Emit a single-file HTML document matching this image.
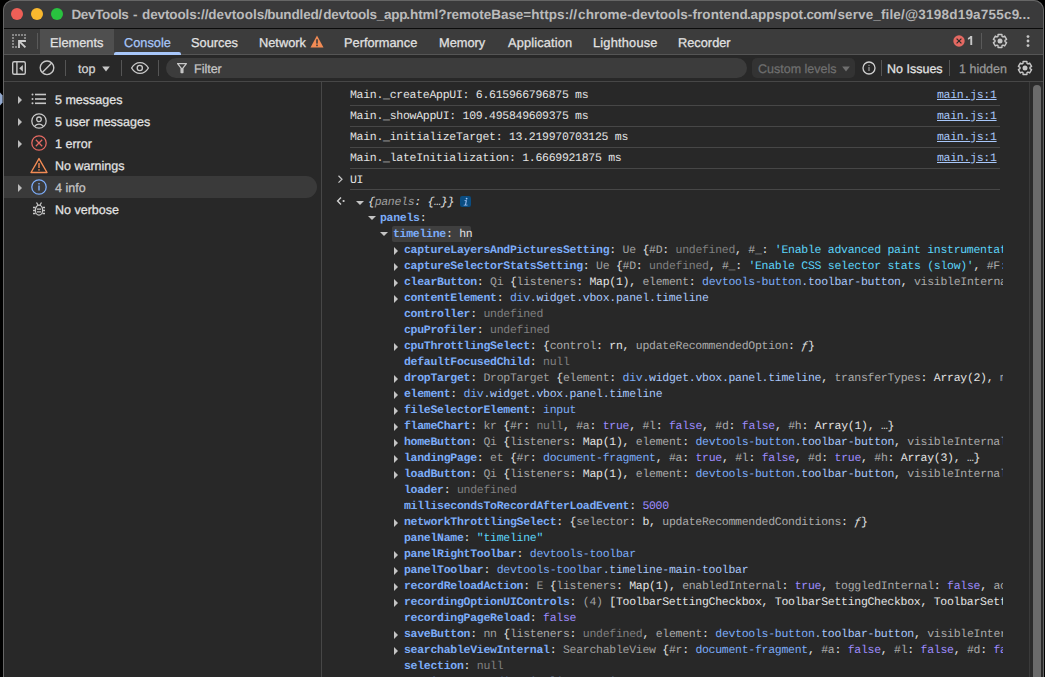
<!DOCTYPE html>
<html><head><meta charset="utf-8">
<style>
*{box-sizing:border-box}
html,body{margin:0;padding:0}
body{text-rendering:geometricPrecision;width:1045px;height:677px;overflow:hidden;position:relative;background:#000;font-family:"Liberation Sans",sans-serif;color:#e3e3e3}
.a{position:absolute}
svg{position:absolute;overflow:visible}
#clip{position:absolute;left:3px;top:0;width:1041px;height:700px;border-radius:10px 10px 0 0;overflow:hidden;background:#282828}
#c{position:absolute;left:-3px;top:0;width:1045px;height:700px}
#frame{position:absolute;left:3px;top:0;width:1041px;height:720px;border:1px solid #666;border-bottom:none;border-radius:10px 10px 0 0}
.dot{position:absolute;width:12px;height:12px;border-radius:50%;top:8px}
.tt{position:absolute;left:72px;top:7px;font-size:13.5px;line-height:16px;font-weight:bold;color:#bbbbbb;white-space:nowrap}
.tab{-webkit-text-stroke:0.25px currentColor;position:absolute;top:29px;height:25px;font-size:12.8px;line-height:25px;color:#e3e3e3;white-space:nowrap}
.sep{position:absolute;width:1px;background:#555}
.ui{-webkit-text-stroke:0.25px currentColor;position:absolute;font-size:12.5px;line-height:16px;white-space:nowrap}
.srow{-webkit-text-stroke:0.25px currentColor;position:absolute;left:55px;font-size:12.5px;line-height:22px;margin-top:1px;white-space:nowrap;color:#e3e3e3}
.tri{position:absolute;width:0;height:0;border-top:4px solid transparent;border-bottom:4px solid transparent;border-left:4px solid #bcbcbc}
.mono{font-family:"Liberation Mono",monospace;font-size:11.5px;letter-spacing:-0.28px;line-height:16px;white-space:nowrap;position:absolute}
.msg{left:350px;color:#e3e3e3}
.lnk{position:absolute;left:937px;font-family:"Liberation Mono",monospace;font-size:11.5px;letter-spacing:-0.28px;line-height:16px;color:#a8c7fa;text-decoration:underline}
.hr{position:absolute;left:350px;width:650px;height:1px;background:#474747}
.pl{position:absolute;left:404px;width:599px;overflow:hidden;font-family:"Liberation Mono",monospace;font-size:11.5px;letter-spacing:-0.28px;line-height:16px;height:16px;white-space:nowrap;color:#e3e3e3}
.pl .rt{position:absolute}
.rtri{position:absolute;left:394px;width:0;height:0;border-top:4px solid transparent;border-bottom:4px solid transparent;border-left:4.3px solid #c4c4c4}
.dtri{position:absolute;width:0;height:0;border-left:4px solid transparent;border-right:4px solid transparent;border-top:4.5px solid #c4c4c4}
.n{color:#7cacf8;font-weight:bold}
.t{color:#a0a0a0}
.k{color:#ababab}
.u{color:#808080}
.s{color:#5cd5fb}
.b{color:#9e8cff}
.nd{color:#7cacf8}
.nc{color:#a8c7fa}
</style></head>
<body>
<svg style="left:0;top:92px" width="3" height="14" viewBox="0 0 3 14"><path d="M0 0.5L2.6 3.5V10.5L0 13.5z" fill="#93a9cf"/></svg>
<div id="clip"><div id="c">
  <!-- title bar -->
  <div class="a" style="left:0;top:0;width:1045px;height:28px;background:#3a3a3b"></div>
  <div class="a" style="left:0;top:28px;width:1045px;height:1px;background:#0b0b0b"></div>
  <div class="dot" style="left:11px;background:#ee5f57"></div>
  <div class="dot" style="left:31px;background:#f8b82e"></div>
  <div class="dot" style="left:51px;background:#29c23f"></div>
  <div class="tt"><span style="position:absolute;left:-0.60px;letter-spacing:-0.335px">DevTools </span><span style="position:absolute;left:60.90px;letter-spacing:0.425px">- </span><span style="position:absolute;left:70.00px;letter-spacing:-0.111px">devtools://</span><span style="position:absolute;left:136.30px;letter-spacing:0.070px">devtools/</span><span style="position:absolute;left:195.20px;letter-spacing:-0.156px">bundled/</span><span style="position:absolute;left:251.20px;letter-spacing:-0.244px">devtools_app</span><span style="position:absolute;left:334.30px;letter-spacing:-0.067px">.html?</span><span style="position:absolute;left:374.40px;letter-spacing:-0.035px">remoteBase=</span><span style="position:absolute;left:459.20px;letter-spacing:0.112px">https://</span><span style="position:absolute;left:506.10px;letter-spacing:0.048px">chrome-</span><span style="position:absolute;left:559.70px;letter-spacing:0.076px">devtools-</span><span style="position:absolute;left:620.40px;letter-spacing:0.094px">frontend</span><span style="position:absolute;left:674.90px;letter-spacing:-0.019px">.appspot</span><span style="position:absolute;left:731.00px;letter-spacing:-0.373px">.com/</span><span style="position:absolute;left:765.40px;letter-spacing:0.131px">serve_file/</span><span style="position:absolute;left:832.90px;letter-spacing:0.220px">@3198d19a755c9</span><span style="position:absolute;left:946.50px;letter-spacing:0.250px">...</span></div>

  <!-- tab bar -->
  <div class="a" style="left:0;top:29px;width:1045px;height:25px;background:#3c3c3c"></div>
  <div class="a" style="left:0;top:54px;width:1045px;height:1px;background:#555"></div>
  <svg style="left:11px;top:33px" width="16" height="16" viewBox="0 0 16 16">
    <g fill="#b0b0b0"><rect x="1.2" y="1.2" width="1.6" height="1.6"/><rect x="4.2" y="1.2" width="1.6" height="1.6"/><rect x="7.2" y="1.2" width="1.6" height="1.6"/><rect x="10.2" y="1.2" width="1.6" height="1.6"/><rect x="13.2" y="1.2" width="1.6" height="1.6"/><rect x="1.2" y="4.2" width="1.6" height="1.6"/><rect x="1.2" y="7.2" width="1.6" height="1.6"/><rect x="1.2" y="10.2" width="1.6" height="1.6"/><rect x="1.2" y="13.2" width="1.6" height="1.6"/><rect x="4.2" y="13.2" width="1.6" height="1.6"/><rect x="13.2" y="4.2" width="1.6" height="1.6"/></g>
    <path d="M7.1 7.1h7.8v1.8H8.9v6H7.1z" fill="#d0d0d0"/><path d="M8.4 8.4L14.4 14.4" stroke="#d0d0d0" stroke-width="1.8"/>
  </svg>
  <div class="sep" style="left:37px;top:33px;height:16px;background:#5a5a5a"></div>
  <div class="a" style="left:40px;top:29px;width:74px;height:25px;background:#4f4f4f"></div>
  <div class="tab" style="left:50px;top:29.5px">Elements</div>
  <div class="tab" style="left:124px;top:29.5px;color:#a8c7fa">Console</div>
  <div class="a" style="left:114px;top:52px;width:67px;height:3px;background:#a8c7fa;border-radius:2px 2px 0 0"></div>
  <div class="tab" style="left:191px;top:29.5px">Sources</div>
  <div class="tab" style="left:259px;top:29.5px">Network</div>
  <svg style="left:310px;top:35px" width="14" height="13" viewBox="0 0 14 13">
    <path d="M7 0.5L13.5 12.5H0.5z" fill="#f28b54"/>
    <rect x="6.2" y="4.3" width="1.6" height="4.3" fill="#3c3c3c"/><rect x="6.2" y="9.6" width="1.6" height="1.6" fill="#3c3c3c"/>
  </svg>
  <div class="tab" style="left:344px;top:29.5px">Performance</div>
  <div class="tab" style="left:439px;top:29.5px">Memory</div>
  <div class="tab" style="left:508px;top:29.5px;letter-spacing:0.15px">Application</div>
  <div class="tab" style="left:593px;top:29.5px;letter-spacing:0.2px">Lighthouse</div>
  <div class="tab" style="left:678px;top:29.5px">Recorder</div>
  <svg style="left:953px;top:35px" width="12" height="12" viewBox="0 0 12 12">
    <circle cx="6" cy="6" r="5.7" fill="#e46962"/>
    <path d="M3.6 3.6L8.4 8.4M8.4 3.6L3.6 8.4" stroke="#2a2a2a" stroke-width="1.2"/>
  </svg>
  <svg style="left:966px;top:35px" width="8" height="11" viewBox="0 0 8 11"><path d="M4.3 1H6.2V10H4.3V3.4C3.6 4 2.8 4.4 1.9 4.7V3C3 2.6 3.8 1.9 4.3 1z" fill="#c7c7c7"/></svg>
  <div class="sep" style="left:981px;top:33px;height:16px;background:#5a5a5a"></div>
  <svg style="left:992px;top:33px" width="16" height="16" viewBox="0 0 16 16">
    <path d="M5.99 3.42 L6.07 1.48 L9.93 1.48 L10.01 3.42 L10.96 3.97 L12.68 3.07 L14.61 6.41 L12.97 7.45 L12.97 8.55 L14.61 9.59 L12.68 12.93 L10.96 12.03 L10.01 12.58 L9.93 14.52 L6.07 14.52 L5.99 12.58 L5.04 12.03 L3.32 12.93 L1.39 9.59 L3.03 8.55 L3.03 7.45 L1.39 6.41 L3.32 3.07 L5.04 3.97 Z" fill="none" stroke="#c7c7c7" stroke-width="1.4" stroke-linejoin="round"/>
    <circle cx="8" cy="8" r="2.5" fill="#c7c7c7"/>
  </svg>
  <svg style="left:1024px;top:33px" width="8" height="16" viewBox="0 0 8 16" fill="#c7c7c7">
    <circle cx="4" cy="3.6" r="1.4"/><circle cx="4" cy="8" r="1.4"/><circle cx="4" cy="12.6" r="1.4"/>
  </svg>

  <!-- console toolbar -->
  <div class="a" style="left:0;top:81px;width:1045px;height:1px;background:#474747"></div>
  <svg style="left:11px;top:60px" width="16" height="16" viewBox="0 0 16 16">
    <rect x="1.7" y="1.7" width="12.6" height="12.6" rx="1.5" fill="none" stroke="#c7c7c7" stroke-width="1.4"/>
    <rect x="5.2" y="1.7" width="1.4" height="12.6" fill="#c7c7c7"/>
    <path d="M8.2 8.3L11.9 5V11.7z" fill="#c7c7c7"/>
  </svg>
  <svg style="left:39px;top:60px" width="16" height="16" viewBox="0 0 16 16">
    <circle cx="8" cy="7.8" r="6.8" fill="none" stroke="#c7c7c7" stroke-width="1.4"/>
    <path d="M3.3 12.5L12.7 3.1" stroke="#c7c7c7" stroke-width="1.4"/>
  </svg>
  <div class="sep" style="left:65px;top:60px;height:16px;background:#555"></div>
  <div class="ui" style="left:78px;top:61px;color:#d5d5d5">top</div>
  <svg style="left:102px;top:66px" width="8" height="6" viewBox="0 0 8 6"><path d="M0.2 0.5H7.8L4 5.6z" fill="#c7c7c7"/></svg>
  <div class="sep" style="left:121px;top:60px;height:16px;background:#555"></div>
  <svg style="left:130px;top:60px" width="20" height="16" viewBox="0 0 20 16">
    <path d="M1.6 8C3.6 4.6 6.6 2.6 10 2.6S16.4 4.6 18.4 8C16.4 11.4 13.4 13.4 10 13.4S3.6 11.4 1.6 8z" fill="none" stroke="#c7c7c7" stroke-width="1.4"/>
    <circle cx="9.8" cy="8" r="2.6" fill="none" stroke="#c7c7c7" stroke-width="1.4"/>
  </svg>
  <div class="sep" style="left:158px;top:60px;height:16px;background:#555"></div>
  <div class="a" style="left:166px;top:58px;width:581px;height:20px;background:#3c3c3c;border-radius:10px"></div>
  <svg style="left:176px;top:62px" width="12" height="12" viewBox="0 0 12 12">
    <path d="M1.6 1.6H10.4L6.9 6.1V10.6H5.1V6.1z" fill="none" stroke="#c7c7c7" stroke-width="1.3" stroke-linejoin="round"/>
    <rect x="5.1" y="6" width="1.8" height="4.7" fill="#c7c7c7"/>
  </svg>
  <div class="ui" style="left:194px;top:61px;color:#c7c7c7">Filter</div>
  <div class="a" style="left:752px;top:58px;width:103px;height:20px;background:#333333;border-radius:5px"></div>
  <div class="ui" style="left:758px;top:61px;color:#6f6f6f">Custom levels</div>
  <svg style="left:842px;top:66px" width="8" height="6" viewBox="0 0 8 6"><path d="M0.2 0.5H7.8L4 5.6z" fill="#6f6f6f"/></svg>
  <svg style="left:861px;top:60px" width="16" height="16" viewBox="0 0 16 16">
    <circle cx="8" cy="8" r="6" fill="none" stroke="#d0d0d0" stroke-width="1.3"/>
    <rect x="7.3" y="7" width="1.4" height="4" fill="#8a8a8a"/><rect x="7.3" y="4.8" width="1.4" height="1.3" fill="#8a8a8a"/>
  </svg>
  <div class="sep" style="left:881px;top:60px;height:16px;background:#555"></div>
  <div class="ui" style="left:887px;top:61px;color:#e3e3e3">No Issues</div>
  <div class="sep" style="left:949px;top:60px;height:16px;background:#555"></div>
  <div class="ui" style="left:959px;top:61px;color:#9a9a9a">1 hidden</div>
  <svg style="left:1017px;top:60px" width="16" height="16" viewBox="0 0 16 16">
    <path d="M5.99 3.42 L6.07 1.48 L9.93 1.48 L10.01 3.42 L10.96 3.97 L12.68 3.07 L14.61 6.41 L12.97 7.45 L12.97 8.55 L14.61 9.59 L12.68 12.93 L10.96 12.03 L10.01 12.58 L9.93 14.52 L6.07 14.52 L5.99 12.58 L5.04 12.03 L3.32 12.93 L1.39 9.59 L3.03 8.55 L3.03 7.45 L1.39 6.41 L3.32 3.07 L5.04 3.97 Z" fill="none" stroke="#c7c7c7" stroke-width="1.4" stroke-linejoin="round"/>
    <circle cx="8" cy="8" r="2.5" fill="#c7c7c7"/>
  </svg>

  <!-- sidebar -->
  <div class="a" style="left:4px;top:176px;width:313px;height:22px;background:#3a3a3a;border-radius:0 11px 11px 0"></div>
  <div class="a" style="left:321px;top:82px;width:1px;height:620px;background:#474747"></div>

  <div class="tri" style="left:18px;top:96px"></div>
  <svg style="left:31px;top:92px" width="16" height="16" viewBox="0 0 16 16" fill="#c7c7c7">
    <circle cx="1.5" cy="2.5" r="1"/><circle cx="1.5" cy="7" r="1"/><circle cx="1.5" cy="11.3" r="1"/>
    <rect x="4" y="1.7" width="11" height="1.6"/><rect x="4" y="6.2" width="11" height="1.6"/><rect x="4" y="10.5" width="11" height="1.6"/>
  </svg>
  <div class="srow" style="top:88px">5 messages</div>

  <div class="tri" style="left:18px;top:118px"></div>
  <svg style="left:31px;top:113px" width="16" height="16" viewBox="0 0 16 16">
    <circle cx="8" cy="8" r="7.2" fill="none" stroke="#c7c7c7" stroke-width="1.3"/>
    <circle cx="8" cy="6.3" r="2.3" fill="none" stroke="#c7c7c7" stroke-width="1.3"/>
    <path d="M3.6 13.3C5 11.8 6.4 11.2 8 11.2S11 11.8 12.4 13.3" fill="none" stroke="#c7c7c7" stroke-width="1.3"/>
  </svg>
  <div class="srow" style="top:110px">5 user messages</div>

  <div class="tri" style="left:18px;top:140px"></div>
  <svg style="left:31px;top:135px" width="16" height="16" viewBox="0 0 16 16">
    <circle cx="8" cy="8" r="7.2" fill="none" stroke="#e46962" stroke-width="1.3"/>
    <path d="M4.8 4.8L11.2 11.2M11.2 4.8L4.8 11.2" stroke="#e46962" stroke-width="1.3"/>
  </svg>
  <div class="srow" style="top:132px">1 error</div>

  <svg style="left:30px;top:157px" width="18" height="17" viewBox="0 0 18 17">
    <path d="M9 1.6L17 15.5H1z" fill="none" stroke="#f28b54" stroke-width="1.4" stroke-linejoin="round"/>
    <rect x="8.3" y="6" width="1.4" height="5" fill="#f28b54"/><rect x="8.3" y="12.2" width="1.4" height="1.4" fill="#f28b54"/>
  </svg>
  <div class="srow" style="top:154px">No warnings</div>

  <div class="tri" style="left:18px;top:184px"></div>
  <svg style="left:31px;top:179px" width="16" height="16" viewBox="0 0 16 16">
    <circle cx="8" cy="8" r="7.2" fill="none" stroke="#7cacf8" stroke-width="1.3"/>
    <rect x="7.3" y="6.5" width="1.4" height="5" fill="#7cacf8"/><rect x="7.3" y="4" width="1.4" height="1.4" fill="#7cacf8"/>
  </svg>
  <div class="srow" style="top:176px;color:#c7c7c7">4 info</div>

  <svg style="left:31px;top:201px" width="16" height="16" viewBox="0 0 16 16" fill="none" stroke="#c7c7c7" stroke-width="1.3">
    <ellipse cx="8" cy="9.2" rx="3.6" ry="5"/>
    <path d="M5.5 1.5L7 4M10.5 1.5L9 4M2 6.5H4.4M2 9.5H4.4M2 12.5H4.6M11.6 6.5H14M11.6 9.5H14M11.4 12.5H14M6 8.2H10M6 10.8H10"/>
  </svg>
  <div class="srow" style="top:198px">No verbose</div>

  <!-- console -->
  <div class="mono msg" style="top:88px">Main._createAppUI: 6.615966796875 ms</div>
  <div class="lnk" style="top:88px">main.js:1</div>
  <div class="hr" style="top:105px"></div>
  <div class="mono msg" style="top:109px">Main._showAppUI: 109.495849609375 ms</div>
  <div class="lnk" style="top:109px">main.js:1</div>
  <div class="hr" style="top:126px"></div>
  <div class="mono msg" style="top:130px">Main._initializeTarget: 13.219970703125 ms</div>
  <div class="lnk" style="top:130px">main.js:1</div>
  <div class="hr" style="top:147px"></div>
  <div class="mono msg" style="top:151px">Main._lateInitialization: 1.6669921875 ms</div>
  <div class="lnk" style="top:151px">main.js:1</div>
  <div class="hr" style="top:168px"></div>
  <svg style="left:336px;top:174px" width="10" height="10" viewBox="0 0 10 10"><path d="M2.5 1.8L6 5.2L2.5 8.6" fill="none" stroke="#c7c7c7" stroke-width="1.2"/></svg>
  <div class="mono msg" style="top:173px">UI</div>
  <div class="hr" style="top:189px"></div>

  <svg style="left:336px;top:196px" width="10" height="10" viewBox="0 0 10 10"><path d="M5 1.6L1.6 5L5 8.4" fill="none" stroke="#d0d0d0" stroke-width="1.4"/><circle cx="7.6" cy="5" r="1.1" fill="#d0d0d0"/></svg>
  <div class="dtri" style="left:356px;top:201px"></div>
  <div class="mono" style="left:368px;top:195px"><i>{<span style="color:#a0a0a0">panels</span>: {…}}</i></div>
  <svg style="left:460px;top:196px" width="11" height="11" viewBox="0 0 11 11">
    <rect x="0" y="0" width="11" height="11" rx="2.2" fill="#0a4d82"/>
    <circle cx="6.6" cy="2.6" r="0.9" fill="#a8c7fa"/>
    <path d="M4.6 4.3H6.9L6.1 8.7H7.6L7.4 9.4H3.6L3.8 8.7H5.1L5.7 5H4.5z" fill="#a8c7fa"/>
  </svg>
  <div class="dtri" style="left:368px;top:216px"></div>
  <div class="mono" style="left:380px;top:211px"><span class="n">panels</span>:</div>
  <div class="a" style="left:392px;top:226px;width:79px;height:16px;background:#3f3f3f;border-radius:2px"></div>
  <div class="dtri" style="left:380px;top:232px"></div>
  <div class="mono" style="left:393px;top:227px"><span class="n">timeline</span>: hn</div>

<i class="rtri" style="top:247px"></i><div class="pl" style="top:243px"><span class="n">captureLayersAndPicturesSetting</span>: <span class="t">Ue</span> {<span class="k">#D</span>: <span class="u">undefined</span>, <span class="k">#_</span>: <span class="s">'Enable advanced paint instrumentation (slow)'</span>, #F: ...</div>
<i class="rtri" style="top:263px"></i><div class="pl" style="top:259px"><span class="n">captureSelectorStatsSetting</span>: <span class="t">Ue</span> {<span class="k">#D</span>: <span class="u">undefined</span>, <span class="k">#_</span>: <span class="s">'Enable CSS selector stats (slow)'</span>, <span class="k">#F</span>: ...</div>
<i class="rtri" style="top:279px"></i><div class="pl" style="top:275px"><span class="n">clearButton</span>: <span class="t">Qi</span> {<span class="k">listeners</span>: Map(1), <span class="k">element</span>: <span class="nd">devtools-button</span><span class="nc">.toolbar-button</span>, <span class="k">visibleInternal</span>: true</div>
<i class="rtri" style="top:295px"></i><div class="pl" style="top:291px"><span class="n">contentElement</span>: <span class="nd">div</span><span class="nc">.widget.vbox.panel.timeline</span></div>
<div class="pl" style="top:307px"><span class="n">controller</span>: <span class="u">undefined</span></div>
<div class="pl" style="top:323px"><span class="n">cpuProfiler</span>: <span class="u">undefined</span></div>
<i class="rtri" style="top:343px"></i><div class="pl" style="top:339px"><span class="n">cpuThrottlingSelect</span>: {<span class="k">control</span>: rn, <span class="k">updateRecommendedOption</span>: <i>ƒ</i>}</div>
<div class="pl" style="top:355px"><span class="n">defaultFocusedChild</span>: <span class="u">null</span></div>
<i class="rtri" style="top:375px"></i><div class="pl" style="top:371px"><span class="n">dropTarget</span>: <span class="t">DropTarget</span> {<span class="k">element</span>: <span class="nd">div</span><span class="nc">.widget.vbox.panel.timeline</span>, <span class="k">transferTypes</span>: Array(2), <span class="k">messageElement</span>: div}</div>
<i class="rtri" style="top:391px"></i><div class="pl" style="top:387px"><span class="n">element</span>: <span class="nd">div</span><span class="nc">.widget.vbox.panel.timeline</span></div>
<i class="rtri" style="top:407px"></i><div class="pl" style="top:403px"><span class="n">fileSelectorElement</span>: <span class="nd">input</span></div>
<i class="rtri" style="top:423px"></i><div class="pl" style="top:419px"><span class="n">flameChart</span>: <span class="t">kr</span> {<span class="k">#r</span>: <span class="u">null</span>, <span class="k">#a</span>: <span class="b">true</span>, <span class="k">#l</span>: <span class="b">false</span>, <span class="k">#d</span>: <span class="b">false</span>, <span class="k">#h</span>: Array(1), …}</div>
<i class="rtri" style="top:439px"></i><div class="pl" style="top:435px"><span class="n">homeButton</span>: <span class="t">Qi</span> {<span class="k">listeners</span>: Map(1), <span class="k">element</span>: <span class="nd">devtools-button</span><span class="nc">.toolbar-button</span>, <span class="k">visibleInternal</span>: true</div>
<i class="rtri" style="top:455px"></i><div class="pl" style="top:451px"><span class="n">landingPage</span>: <span class="t">et</span> {<span class="k">#r</span>: <span class="nd">document-fragment</span>, <span class="k">#a</span>: <span class="b">true</span>, <span class="k">#l</span>: <span class="b">false</span>, <span class="k">#d</span>: <span class="b">true</span>, <span class="k">#h</span>: Array(3), …}</div>
<i class="rtri" style="top:471px"></i><div class="pl" style="top:467px"><span class="n">loadButton</span>: <span class="t">Qi</span> {<span class="k">listeners</span>: Map(1), <span class="k">element</span>: <span class="nd">devtools-button</span><span class="nc">.toolbar-button</span>, <span class="k">visibleInternal</span>: true</div>
<div class="pl" style="top:483px"><span class="n">loader</span>: <span class="u">undefined</span></div>
<div class="pl" style="top:499px"><span class="n">millisecondsToRecordAfterLoadEvent</span>: <span class="b">5000</span></div>
<i class="rtri" style="top:519px"></i><div class="pl" style="top:515px"><span class="n">networkThrottlingSelect</span>: {<span class="k">selector</span>: b, <span class="k">updateRecommendedConditions</span>: <i>ƒ</i>}</div>
<div class="pl" style="top:531px"><span class="n">panelName</span>: <span class="s">"timeline"</span></div>
<i class="rtri" style="top:551px"></i><div class="pl" style="top:547px"><span class="n">panelRightToolbar</span>: <span class="nd">devtools-toolbar</span></div>
<i class="rtri" style="top:567px"></i><div class="pl" style="top:563px"><span class="n">panelToolbar</span>: <span class="nd">devtools-toolbar</span><span class="nc">.timeline-main-toolbar</span></div>
<i class="rtri" style="top:583px"></i><div class="pl" style="top:579px"><span class="n">recordReloadAction</span>: <span class="t">E</span> {<span class="k">listeners</span>: Map(1), <span class="k">enabledInternal</span>: <span class="b">true</span>, <span class="k">toggledInternal</span>: <span class="b">false</span>, <span class="k">actionDelegate</span>: ...</div>
<i class="rtri" style="top:599px"></i><div class="pl" style="top:595px"><span class="n">recordingOptionUIControls</span>: <span class="t">(4)</span> [ToolbarSettingCheckbox, ToolbarSettingCheckbox, ToolbarSettingCheckbox</div>
<div class="pl" style="top:611px"><span class="n">recordingPageReload</span>: <span class="b">false</span></div>
<i class="rtri" style="top:631px"></i><div class="pl" style="top:627px"><span class="n">saveButton</span>: <span class="t">nn</span> {<span class="k">listeners</span>: <span class="u">undefined</span>, <span class="k">element</span>: <span class="nd">devtools-button</span><span class="nc">.toolbar-button</span>, <span class="k">visibleInternal</span>: true</div>
<i class="rtri" style="top:647px"></i><div class="pl" style="top:643px"><span class="n">searchableViewInternal</span>: <span class="t">SearchableView</span> {<span class="k">#r</span>: <span class="nd">document-fragment</span>, <span class="k">#a</span>: <span class="b">false</span>, <span class="k">#l</span>: <span class="b">false</span>, <span class="k">#d</span>: <span class="b">false</span></div>
<div class="pl" style="top:659px"><span class="n">selection</span>: <span class="u">null</span></div>
<i class="rtri" style="top:679px"></i><div class="pl" style="top:675px"><span class="n">settingsPane</span>: <span class="nd">div</span><span class="nc">.timeline-settings-pane</span></div>

  <!-- scrollbar -->
  <div class="a" style="left:1029px;top:82px;width:15px;height:620px;background:#2b2b2b;border-left:1px solid #3a3a3a"></div>
  <div class="a" style="left:1033px;top:85px;width:8px;height:620px;background:#6b6b6b;border-radius:4px"></div>
</div></div>
<div id="frame"></div>
</body></html>
